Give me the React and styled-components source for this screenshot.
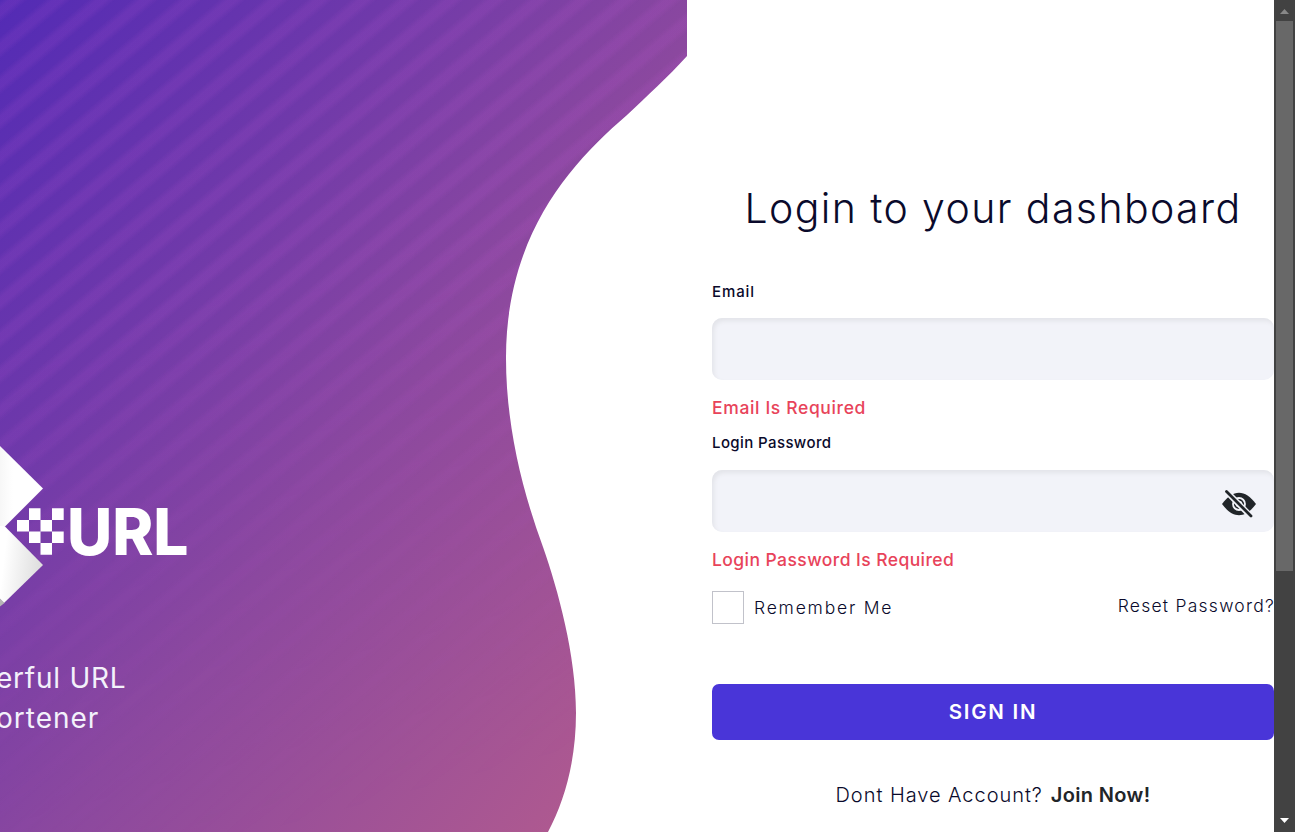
import React from "react";
import styled, { createGlobalStyle } from "styled-components";

const GlobalStyle = createGlobalStyle`
  * { box-sizing: border-box; }
  body { margin: 0; background: #fff; overflow: hidden; font-family: Inter, "Open Sans", sans-serif; color: #0a0a2b; }
`;

const Page = styled.main`
  display: grid;
  grid-template-columns: 687px 587px 21px;
  width: 1295px;
  height: 832px;
  overflow: hidden;
`;

const Hero = styled.section`
  position: relative;
  display: flex;
  flex-direction: column;
  padding-top: 446px;
  overflow: hidden;
  background: linear-gradient(128.6deg, #532bb5 0, #6f39aa 300px, #8b489f 560px, #ae5990 953px);
  clip-path: path("M0 0H687V56C667 78 648 95 627 115C570 164 506 235 506 358C506 425 522 490 543 547C558 590 576 655 576 713C576 760 565 800 548 832H0Z");

  &::before {
    content: "";
    position: absolute;
    inset: 0;
    background: repeating-linear-gradient(140.3deg, #d060e000 0, #d060e01e 6px, #d060e01e 12px, #d060e000 18px, #d060e000 27.9px);
    mask-image: linear-gradient(165deg, #000 0, #000 35%, #0006 60%, transparent 90%);
  }
`;

const Logo = styled.svg`
  position: relative;
  display: block;
  flex: none;
`;

const Tagline = styled.p`
  position: relative;
  margin: 51px 0 0 -4px;
  font-size: 28px;
  line-height: 40px;
  color: #f3f1fb;
`;

const TagLine = styled.span`
  display: block;
  letter-spacing: ${(p) => p.$spacing};
`;

const Form = styled.form`
  display: flex;
  flex-direction: column;
  padding: 180px 0 0 25px;
`;

const Title = styled.h1`
  margin: 0;
  height: 56px;
  text-align: center;
  white-space: nowrap;
  font-size: 41px;
  line-height: 56px;
  font-weight: 300;
  letter-spacing: 1.4px;
`;

const Label = styled.label`
  height: 20px;
  margin-top: ${(p) => p.$top};
  font-size: 15px;
  line-height: 20px;
  font-weight: 450;
  letter-spacing: ${(p) => p.$spacing};
`;

const Field = styled.div`
  display: flex;
  align-items: center;
  justify-content: flex-end;
  height: 62px;
  margin-top: ${(p) => p.$top || "16px"};
  padding-right: 17px;
  border-radius: 10px;
  background: #f2f3f9;
  box-shadow: inset 2px 3px 4px #e3e4e9;
`;

const Input = styled.input`
  flex: 1;
  min-width: 0;
  height: 60px;
  padding: 0 18px;
  border: 0;
  outline: 0;
  background: transparent;
`;

const ErrorText = styled.p`
  margin: 16px 0 0;
  height: 24px;
  font-size: 17.5px;
  line-height: 24px;
  font-weight: 500;
  color: #e8435a;
  letter-spacing: ${(p) => p.$spacing};
`;

const Options = styled.div`
  display: flex;
  align-items: center;
  height: 33px;
  margin-top: 19px;
`;

const Checkbox = styled.span`
  width: 32px;
  height: 33px;
  margin-right: 10px;
  border: 1px solid #c1c2ca;
`;

const Remember = styled.span`
  font-size: 17.5px;
  font-weight: 300;
  letter-spacing: 1.8px;
`;

const Reset = styled.a`
  margin: -4px -1px 0 auto;
  font-size: 17.5px;
  font-weight: 300;
  letter-spacing: 1.25px;
  white-space: nowrap;
`;

const SignIn = styled.button`
  height: 56px;
  margin-top: 60px;
  padding: 0;
  border: 0;
  border-radius: 7px;
  background: #4935d8;
  color: #fff;
  font: 600 20.5px/56px Inter, sans-serif;
  letter-spacing: 1.75px;
`;

const Join = styled.p`
  display: flex;
  justify-content: center;
  gap: 8px;
  margin: 43px 0 0;
  font-size: 20px;
  line-height: 24px;
  font-weight: 300;
  letter-spacing: 0.95px;
  white-space: nowrap;
`;

const JoinLink = styled.a`
  font-weight: 600;
  letter-spacing: 0.35px;
  color: #212529;
`;

const ScrollTrack = styled.aside`
  display: flex;
  flex-direction: column;
  align-items: center;
  background: #424242;
`;

const ScrollArrow = styled.svg`
  display: block;
  flex: none;
  width: 21px;
  height: 21px;
  margin-top: ${(p) => (p.$end ? "auto" : 0)};
`;

const Thumb = styled.div`
  width: 17px;
  height: 550px;
  background: #686868;
`;

const Eye = styled.svg`
  margin-top: 6px;
`;

function BrandLogo() {
  return (
    <Logo width="200" height="161" viewBox="0 446 200 161">
      <defs>
        <linearGradient id="upper" x1="0" x2="1">
          <stop offset="0" stopColor="#f7f7f7" />
          <stop offset=".3" stopColor="#fff" />
        </linearGradient>
        <linearGradient id="lower" x1="0" y1=".35" x2="1" y2=".55">
          <stop offset=".1" stopColor="#fff" />
          <stop offset="1" stopColor="#dcdcdc" />
        </linearGradient>
      </defs>
      <path d="M0 446L43 488.5L5 526.5H0Z" fill="url(#upper)" />
      <path d="M0 526H4.5L43 565L4 603L0 599Z" fill="url(#lower)" />
      <path d="M0 598.5L4.5 603L0 606.5Z" fill="#b5b5b5" />
      <path fill="#fff" d="M29 508.3h11.5v11.7H29zM52 508.3h11.7v11.7H52zM17 520h12v11.4H17zM40.5 520H52v11.4H40.5zM29 531.4h11.5V543H29zM52 531.4h11.7V543H52zM40.5 543H52v11.7H40.5z" />
      <text x="67" y="554.6" fill="#fff" fontFamily="Inter" fontWeight="800" fontSize="64" textLength="121.5" lengthAdjust="spacingAndGlyphs">URL</text>
    </Logo>
  );
}

function HiddenEye() {
  return (
    <Eye width="36" height="32" viewBox="1221 488 36 32">
      <path d="M1222 504C1228 496 1233 492.7 1239 492.7S1250 496 1256 504C1250 512 1245 515.2 1239 515.2S1228 512 1222 504Z" fill="#212529" />
      <circle cx="1239" cy="504" r="6" fill="none" stroke="#f2f3f9" strokeWidth="1.8" />
      <circle cx="1239" cy="504" r="2.7" fill="none" stroke="#f2f3f9" strokeWidth="1.2" />
      <path d="M1226 491L1251 516.5" stroke="#f2f3f9" strokeWidth="6" />
      <path d="M1226.5 491.5L1251 516" stroke="#212529" strokeWidth="2.8" strokeLinecap="round" />
    </Eye>
  );
}

export default function App() {
  return (
    <>
      <GlobalStyle />
      <Page>
        <Hero>
          <BrandLogo />
          <Tagline>
            <TagLine $spacing="0.75px">erful URL</TagLine>
            <TagLine $spacing="1px">ortener</TagLine>
          </Tagline>
        </Hero>
        <Form>
          <Title>Login to your dashboard</Title>
          <Label $top="46px" htmlFor="email" $spacing="0.9px">Email</Label>
          <Field><Input id="email" /></Field>
          <ErrorText $spacing="0.65px">Email Is Required</ErrorText>
          <Label $top="13px" htmlFor="password" $spacing="0.4px">Login Password</Label>
          <Field $top="17px">
            <Input id="password" type="password" />
            <HiddenEye />
          </Field>
          <ErrorText $spacing="0.43px">Login Password Is Required</ErrorText>
          <Options>
            <Checkbox />
            <Remember>Remember Me</Remember>
            <Reset>Reset Password?</Reset>
          </Options>
          <SignIn type="button">SIGN IN</SignIn>
          <Join>
            <span>Dont Have Account?</span>
            <JoinLink>Join Now!</JoinLink>
          </Join>
        </Form>
        <ScrollTrack>
          <ScrollArrow viewBox="0 0 21 21"><path d="M6 14H15L10.5 9Z" fill="#888" /></ScrollArrow>
          <Thumb />
          <ScrollArrow $end viewBox="0 0 21 21"><path d="M6 7H15L10.5 12Z" fill="#fff" /></ScrollArrow>
        </ScrollTrack>
      </Page>
    </>
  );
}
